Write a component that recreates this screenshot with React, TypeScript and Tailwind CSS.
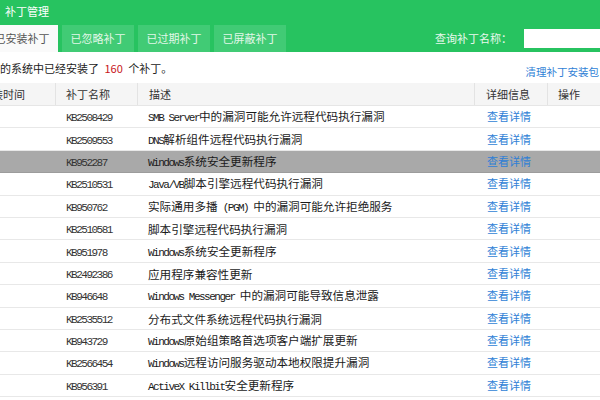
import React from 'react';

const ROWS = [
  { kb: 'KB2508429', desc: 'SMB Server中的漏洞可能允许远程代码执行漏洞' },
  { kb: 'KB2509553', desc: 'DNS解析组件远程代码执行漏洞' },
  { kb: 'KB952287', desc: 'Windows系统安全更新程序', active: true },
  { kb: 'KB2510531', desc: 'Java/VB脚本引擎远程代码执行漏洞' },
  { kb: 'KB950762', desc: '实际通用多播 (PGM) 中的漏洞可能允许拒绝服务' },
  { kb: 'KB2510581', desc: '脚本引擎远程代码执行漏洞' },
  { kb: 'KB951978', desc: 'Windows系统安全更新程序' },
  { kb: 'KB2492386', desc: '应用程序兼容性更新' },
  { kb: 'KB946648', desc: 'Windows Messenger 中的漏洞可能导致信息泄露' },
  { kb: 'KB2535512', desc: '分布式文件系统远程代码执行漏洞' },
  { kb: 'KB943729', desc: 'Windows原始组策略首选项客户端扩展更新' },
  { kb: 'KB2566454', desc: 'Windows远程访问服务驱动本地权限提升漏洞' },
  { kb: 'KB956391', desc: 'ActiveX Killbit安全更新程序' },
];

const TABS = ['已安装补丁', '已忽略补丁', '已过期补丁', '已屏蔽补丁'];

const UI = "font-['Noto_Sans_CJK_SC',sans-serif]";

// ascii runs get the narrow mono face, like the old bitmap font
function Mixed({ text }: { text: string }) {
  const parts = text.split(/([\x00-\x7f]+)/).filter(Boolean);
  return (
    <>
      {parts.map((p, i) =>
        /^[\x00-\x7f]+$/.test(p) ? (
          <span key={i} className="font-['Liberation_Mono',monospace] text-[11px] tracking-[-1.5px] whitespace-pre">
            {p}
          </span>
        ) : (
          <span key={i} className="font-['Noto_Sans_CJK_SC',sans-serif] text-[11.6px]">
            {p}
          </span>
        )
      )}
    </>
  );
}

export default function App() {
  return (
    <div className={`w-[600px] h-[400px] overflow-hidden bg-white ${UI}`}>
      <div className="ml-[-16px] w-[630px]">
        {/* green header */}
        <div className="bg-[#27c360]">
          <div className="h-[25px] flex items-center pl-[21px] pb-[3px] text-[11px] text-white">补丁管理</div>
          <div className="h-[27px] flex items-stretch justify-between">
            <div className="flex items-stretch gap-[4px] pl-[2px]">
              {TABS.map((t, i) => (
                <div
                  key={t}
                  className={
                    i === 0
                      ? 'w-[72px] flex items-center justify-center text-[11px] bg-[#fafafa] text-[#555]'
                      : 'w-[72px] flex items-center justify-center text-[11px] bg-[#41cb75] text-[#e2f7e8]'
                  }
                >
                  {t}
                </div>
              ))}
            </div>
            <div className="flex items-center">
              <span className="text-[11px] text-[#eaf9ee]">查询补丁名称：</span>
              <div className="ml-[12px] w-[90px] h-[19px] bg-white" />
            </div>
          </div>
        </div>

        {/* summary line */}
        <div className="h-[31px] flex items-start justify-between">
          <div className="pt-[9px] pl-[5px] text-[11px] leading-[14px] text-[#222]">
            您的系统中已经安装了 <span className="text-[#c8161d] mx-[3px]">160</span> 个补丁。
          </div>
          <div className="pt-[13px] pr-[15px] text-[10.5px] leading-[14px] text-[#2f7fd6]">清理补丁安装包</div>
        </div>

        {/* table */}
        <div className="h-[23px] flex bg-[#f5f5f5] border-b border-[#e6e6e6] text-[11px] text-[#333]">
          <div className="w-[71px] flex items-center"><span className="ml-[-3px]">安装时间</span></div>
          <div className="w-[82px] flex items-center pl-[10px] border-l border-[#e3e3e3]">补丁名称</div>
          <div className="w-[337px] flex items-center pl-[11px] border-l border-[#e3e3e3]">描述</div>
          <div className="w-[73px] flex items-center pl-[11px] border-l border-[#e3e3e3]">详细信息</div>
          <div className="flex-1 flex items-center pl-[10px] border-l border-[#e3e3e3]">操作</div>
        </div>
        {ROWS.map((r) => (
          <div
            key={r.kb}
            className={
              r.active
                ? 'h-[22.4px] flex items-center pb-[1px] bg-[#a9a9a9] border-b border-[#9c9c9c]'
                : 'h-[22.4px] flex items-center pb-[1px] border-b border-[#e8e8e8]'
            }
          >
            <div className="w-[71px]" />
            <div className="w-[82px] pl-[11px] leading-[16px] text-[#333]">
              <Mixed text={r.kb} />
            </div>
            <div className="w-[337px] pl-[11px] leading-[16px] text-[#1a1a1a] whitespace-nowrap overflow-hidden">
              <Mixed text={r.desc} />
            </div>
            <div className="w-[73px] pl-[13px] leading-[16px] text-[11px] text-[#2f7fd6]">查看详情</div>
            <div className="flex-1" />
          </div>
        ))}
      </div>
    </div>
  );
}
